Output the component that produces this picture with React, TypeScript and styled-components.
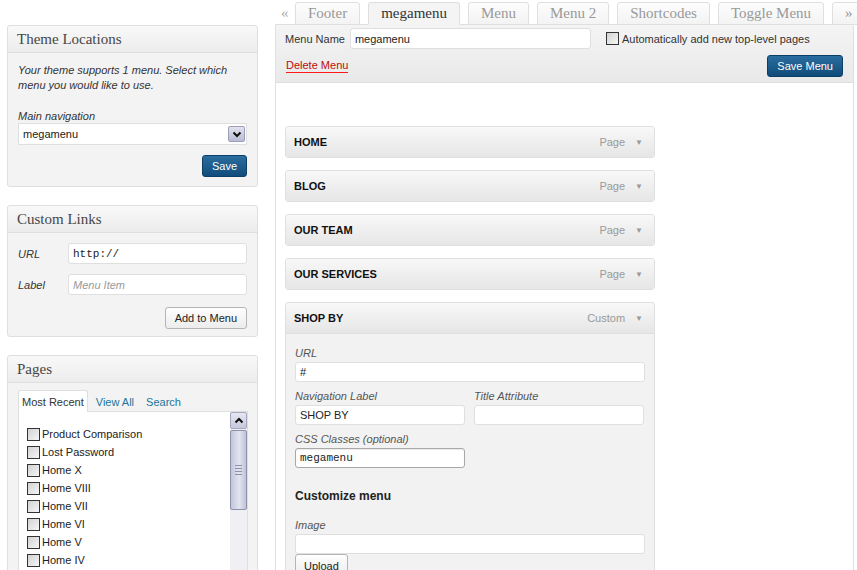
import React from 'react';
import styled, { createGlobalStyle } from 'styled-components';

const GlobalStyle = createGlobalStyle`
  html, body { margin: 0; padding: 0; background: #fff; overflow: hidden; }
  body { font-family: "Liberation Sans", Arial, sans-serif; font-size: 11px; color: #333; }
  * { box-sizing: border-box; }
`;

const Page = styled.div`
  display: flex;
  align-items: flex-start;
  gap: 17px;
  padding: 2px 0 0 7px;
  width: 857px;
  height: 570px;
  overflow: hidden;
`;

/* ---------- Sidebar ---------- */
const Sidebar = styled.div`
  width: 251px;
  flex: none;
  display: flex;
  flex-direction: column;
  gap: 18px;
  margin-top: 23px;
`;

const Box = styled.div`
  border: 1px solid #dfdfdf;
  border-radius: 3px;
  background: #f3f3f3;
`;

const BoxHeader = styled.h3`
  margin: 0;
  height: 27px;
  padding: 0 9px;
  display: flex;
  align-items: center;
  font: 15px "Liberation Serif", "Times New Roman", serif;
  color: #464646;
  background: linear-gradient(#f9f9f9, #ececec);
  border-bottom: 1px solid #dfdfdf;
  border-radius: 3px 3px 0 0;
`;

const BoxBody = styled.div<{ $pad?: string }>`
  padding: ${(p) => p.$pad || '10px'};
  display: flex;
  flex-direction: column;
`;

const Hint = styled.p`
  margin: 0 0 16px;
  font-style: italic;
  line-height: 15px;
`;

const FieldLabel = styled.label`
  display: block;
  font-style: italic;
  line-height: 14px;
  color: #333;
`;

const FakeSelect = styled.div`
  height: 22px;
  border: 1px solid #dfdfdf;
  background: #fff;
  display: flex;
  align-items: center;
  justify-content: space-between;
  padding: 0 1px 0 4px;
  color: #222;
`;

const SelectArrow = styled.span`
  width: 17px;
  height: 16px;
  border: 1px solid #9d9fb8;
  border-radius: 2px;
  background: linear-gradient(#e2e3ee, #b9bbd3);
  display: flex;
  align-items: center;
  justify-content: center;
`;

const RightRow = styled.div<{ $mt?: number }>`
  display: flex;
  justify-content: flex-end;
  margin-top: ${(p) => p.$mt ?? 10}px;
`;

const PrimaryButton = styled.button`
  height: 22px;
  padding: 0 9px;
  border: 1px solid #0c3f66;
  border-radius: 3px;
  background: linear-gradient(#2b6d9f, #104c7b);
  color: #fff;
  font: 11px "Liberation Sans", Arial, sans-serif;
  cursor: pointer;
`;

const SecondaryButton = styled.button`
  height: 22px;
  padding: 0 9px;
  border: 1px solid #b5b5b5;
  border-radius: 3px;
  background: linear-gradient(#fefefe, #ececec);
  color: #222;
  font: 11px "Liberation Sans", Arial, sans-serif;
  cursor: pointer;
`;

const LinkRow = styled.div<{ $mb?: number }>`
  display: grid;
  grid-template-columns: 50px 1fr;
  align-items: center;
  margin-bottom: ${(p) => p.$mb ?? 0}px;
`;

const TextInput = styled.div<{ $mono?: boolean; $placeholder?: boolean; $dark?: boolean; $h?: number }>`
  height: ${(p) => p.$h ?? 20}px;
  border: 1px solid ${(p) => (p.$dark ? '#a8a8a8' : '#dfdfdf')};
  border-radius: 3px;
  background: #fff;
  display: flex;
  align-items: center;
  padding: 0 4px;
  font-family: ${(p) => (p.$mono ? '"Liberation Mono", "Courier New", monospace' : '"Liberation Sans", Arial, sans-serif')};
  font-style: ${(p) => (p.$placeholder ? 'italic' : 'normal')};
  color: ${(p) => (p.$placeholder ? '#999' : '#222')};
  font-size: 11px;
  box-shadow: ${(p) => (p.$dark ? 'inset 0 1px 1px rgba(0,0,0,0.08)' : 'none')};
`;

const NameInput = styled(TextInput)`
  width: 241px;
  height: 21px;
`;

const PanelTabs = styled.div`
  display: flex;
  align-items: flex-end;
  height: 22px;
`;

const PanelTab = styled.span<{ $active?: boolean }>`
  height: 22px;
  padding: ${(p) => (p.$active ? '0 3px' : '0')};
  margin-right: ${(p) => (p.$active ? 7 : 10)}px;
  display: flex;
  align-items: center;
  border: 1px solid ${(p) => (p.$active ? '#dfdfdf' : 'transparent')};
  border-bottom: none;
  border-radius: 3px 3px 0 0;
  background: ${(p) => (p.$active ? '#fff' : 'transparent')};
  color: ${(p) => (p.$active ? '#333' : '#21759b')};
  font-size: 11px;
  margin-bottom: -1px;
  position: relative;
`;

const PageList = styled.div`
  display: flex;
  height: 170px;
  border: 1px solid #dfdfdf;
  background: #fff;
`;

const PageItems = styled.ul`
  list-style: none;
  margin: 0;
  padding: 13px 0 0 8px;
  flex: 1;
  overflow: hidden;
`;

const PageItem = styled.li`
  display: flex;
  align-items: center;
  gap: 2px;
  height: 18px;
  color: #222;
`;

const Check = styled.span`
  width: 13px;
  height: 13px;
  border: 1px solid #333;
  background: linear-gradient(135deg, #d2d2d2, #f6f6f6);
  flex: none;
`;

const ScrollTrack = styled.div`
  width: 17px;
  flex: none;
  display: flex;
  flex-direction: column;
  gap: 1px;
  background: #f0f0f4;
`;

const ScrollButton = styled.div`
  height: 17px;
  border: 1px solid #a4a7c0;
  border-radius: 2px;
  background: linear-gradient(#e6e7f1, #c6c8dc);
  display: flex;
  align-items: center;
  justify-content: center;
`;

const ScrollThumb = styled.div`
  height: 80px;
  border: 1px solid #8e91aa;
  border-radius: 2px;
  background: linear-gradient(to right, #c3c6dc, #e2e4f0 55%, #c0c3d8);
  display: flex;
  flex-direction: column;
  align-items: center;
  justify-content: center;
  gap: 2px;
`;

const Grip = styled.span`
  width: 7px;
  height: 1px;
  background: #8e91aa;
`;

/* ---------- Main ---------- */
const Main = styled.div`
  width: 579px;
  flex: none;
  display: flex;
  flex-direction: column;
`;

const TabBar = styled.div`
  display: flex;
  align-items: flex-end;
  height: 23px;
  padding-left: 6px;
  margin-bottom: -1px;
  position: relative;
  z-index: 1;
  white-space: nowrap;
`;

const TabArrow = styled.span`
  flex: none;
  font: 15px "Liberation Serif", serif;
  color: #aaa;
  width: 14px;
  align-self: center;
`;

const MenuTab = styled.span<{ $active?: boolean }>`
  flex: none;
  height: 23px;
  padding: 0 12px;
  margin-right: 8px;
  display: flex;
  align-items: center;
  border: 1px solid #dfdfdf;
  border-bottom-color: ${(p) => (p.$active ? '#f4f4f4' : '#dfdfdf')};
  border-radius: 3px 3px 0 0;
  background: ${(p) => (p.$active ? '#f4f4f4' : 'linear-gradient(#fdfdfd, #f3f3f3)')};
  font: 15px "Liberation Serif", "Times New Roman", serif;
  color: ${(p) => (p.$active ? '#333' : '#999')};
`;

const Panel = styled.div`
  border: 1px solid #dfdfdf;
  border-radius: 0 3px 0 0;
  height: 560px;
  background: #fff;
`;

const EditHeader = styled.div`
  padding: 3px 10px 5px 9px;
  background: linear-gradient(#f4f4f4, #e9e9e9);
  border-bottom: 1px solid #dfdfdf;
  display: flex;
  flex-direction: column;
  gap: 6px;
`;

const HeaderRow = styled.div<{ $spread?: boolean }>`
  display: flex;
  align-items: center;
  justify-content: ${(p) => (p.$spread ? 'space-between' : 'flex-start')};
`;

const InlineLabel = styled.span`
  margin-right: 5px;
  color: #333;
`;

const AutoAdd = styled.label`
  display: flex;
  align-items: center;
  gap: 3px;
  margin-left: 15px;
  color: #333;
`;

const DeleteLink = styled.a`
  color: #bc0b0b;
  text-decoration: none;
  border-bottom: 1px solid #ff1a1a;
  padding-bottom: 1px;
  margin-left: 1px;
`;

const MenuBody = styled.div`
  padding: 43px 9px 0;
  display: flex;
  flex-direction: column;
  gap: 12px;
`;

const MenuItem = styled.div`
  width: 370px;
  border: 1px solid #dfdfdf;
  border-radius: 3px;
  background: #f2f2f2;
  overflow: hidden;
`;

const ItemBar = styled.div<{ $open?: boolean }>`
  height: ${(p) => (p.$open ? 31 : 30)}px;
  display: flex;
  align-items: center;
  padding: 0 11px 0 8px;
  background: linear-gradient(#f8f8f8, #e6e6e6);
  border-bottom: ${(p) => (p.$open ? '1px solid #dfdfdf' : 'none')};
`;

const ItemTitle = styled.span`
  flex: 1;
  font-weight: bold;
  color: #111;
`;

const ItemType = styled.span`
  color: #999;
  margin-right: 10px;
`;

const ItemArrow = styled.span`
  color: #999;
  font-size: 8px;
`;

const Settings = styled.div`
  padding: 13px 9px 0;
`;

const Field = styled.div<{ $mb?: number }>`
  margin-bottom: ${(p) => p.$mb ?? 8}px;
`;

const SettingLabel = styled.label`
  display: block;
  font-style: italic;
  color: #555;
  line-height: 13px;
  margin-bottom: 2px;
`;

const HalfRow = styled.div`
  display: grid;
  grid-template-columns: 170px 170px;
  gap: 9px;
`;

const SubHeading = styled.h4`
  margin: 21px 0 16px;
  font-size: 12px;
  font-weight: bold;
  color: #222;
  line-height: 14px;
`;

const UploadButton = styled(SecondaryButton)`
  height: 23px;
  padding: 0 8px;
`;

const Chevron = ({ up }: { up?: boolean }) => (
  <svg width="10" height="7" viewBox="0 0 10 7">
    <path
      d={up ? 'M1.5 5.5 L5 2 L8.5 5.5' : 'M1.5 1.5 L5 5 L8.5 1.5'}
      fill="none"
      stroke="#111"
      strokeWidth="2"
    />
  </svg>
);

const pages = [
  'Product Comparison',
  'Lost Password',
  'Home X',
  'Home VIII',
  'Home VII',
  'Home VI',
  'Home V',
  'Home IV',
  'Home III',
  'Home II',
];

const collapsed = [
  { title: 'HOME', type: 'Page' },
  { title: 'BLOG', type: 'Page' },
  { title: 'OUR TEAM', type: 'Page' },
  { title: 'OUR SERVICES', type: 'Page' },
];

const tabs = ['Footer', 'megamenu', 'Menu', 'Menu 2', 'Shortcodes', 'Toggle Menu'];

export default function App() {
  return (
    <>
      <GlobalStyle />
      <Page>
        <Sidebar>
          <Box>
            <BoxHeader>Theme Locations</BoxHeader>
            <BoxBody $pad="10px 10px 9px">
              <Hint>
                Your theme supports 1 menu. Select which
                <br />
                menu you would like to use.
              </Hint>
              <FieldLabel>Main navigation</FieldLabel>
              <FakeSelect>
                megamenu
                <SelectArrow>
                  <Chevron />
                </SelectArrow>
              </FakeSelect>
              <RightRow>
                <PrimaryButton>Save</PrimaryButton>
              </RightRow>
            </BoxBody>
          </Box>

          <Box>
            <BoxHeader>Custom Links</BoxHeader>
            <BoxBody $pad="10px 10px 7px">
              <LinkRow $mb={10}>
                <FieldLabel>URL</FieldLabel>
                <TextInput $mono $h={21}>http://</TextInput>
              </LinkRow>
              <LinkRow>
                <FieldLabel>Label</FieldLabel>
                <TextInput $placeholder $h={21}>Menu Item</TextInput>
              </LinkRow>
              <RightRow $mt={12}>
                <SecondaryButton>Add to Menu</SecondaryButton>
              </RightRow>
            </BoxBody>
          </Box>

          <Box>
            <BoxHeader>Pages</BoxHeader>
            <BoxBody $pad="6px 9px 10px 10px">
              <PanelTabs>
                <PanelTab $active>Most Recent</PanelTab>
                <PanelTab>View All</PanelTab>
                <PanelTab>Search</PanelTab>
              </PanelTabs>
              <PageList>
                <PageItems>
                  {pages.map((p) => (
                    <PageItem key={p}>
                      <Check />
                      {p}
                    </PageItem>
                  ))}
                </PageItems>
                <ScrollTrack>
                  <ScrollButton>
                    <Chevron up />
                  </ScrollButton>
                  <ScrollThumb>
                    <Grip />
                    <Grip />
                    <Grip />
                    <Grip />
                  </ScrollThumb>
                </ScrollTrack>
              </PageList>
            </BoxBody>
          </Box>
        </Sidebar>

        <Main>
          <TabBar>
            <TabArrow>«</TabArrow>
            {tabs.map((t) => (
              <MenuTab key={t} $active={t === 'megamenu'}>
                {t}
              </MenuTab>
            ))}
            <MenuTab>»</MenuTab>
          </TabBar>
          <Panel>
            <EditHeader>
              <HeaderRow>
                <InlineLabel>Menu Name</InlineLabel>
                <NameInput>megamenu</NameInput>
                <AutoAdd>
                  <Check />
                  Automatically add new top-level pages
                </AutoAdd>
              </HeaderRow>
              <HeaderRow $spread>
                <DeleteLink>Delete Menu</DeleteLink>
                <PrimaryButton>Save Menu</PrimaryButton>
              </HeaderRow>
            </EditHeader>
            <MenuBody>
              {collapsed.map((m) => (
                <MenuItem key={m.title}>
                  <ItemBar>
                    <ItemTitle>{m.title}</ItemTitle>
                    <ItemType>{m.type}</ItemType>
                    <ItemArrow>▼</ItemArrow>
                  </ItemBar>
                </MenuItem>
              ))}
              <MenuItem>
                <ItemBar $open>
                  <ItemTitle>SHOP BY</ItemTitle>
                  <ItemType>Custom</ItemType>
                  <ItemArrow>▼</ItemArrow>
                </ItemBar>
                <Settings>
                  <Field>
                    <SettingLabel>URL</SettingLabel>
                    <TextInput>#</TextInput>
                  </Field>
                  <HalfRow>
                    <Field>
                      <SettingLabel>Navigation Label</SettingLabel>
                      <TextInput>SHOP BY</TextInput>
                    </Field>
                    <Field>
                      <SettingLabel>Title Attribute</SettingLabel>
                      <TextInput />
                    </Field>
                  </HalfRow>
                  <HalfRow>
                    <Field $mb={0}>
                      <SettingLabel>CSS Classes (optional)</SettingLabel>
                      <TextInput $mono $dark>megamenu</TextInput>
                    </Field>
                  </HalfRow>
                  <SubHeading>Customize menu</SubHeading>
                  <Field $mb={0}>
                    <SettingLabel>Image</SettingLabel>
                    <TextInput />
                  </Field>
                  <UploadButton>Upload</UploadButton>
                </Settings>
              </MenuItem>
            </MenuBody>
          </Panel>
        </Main>
      </Page>
    </>
  );
}
